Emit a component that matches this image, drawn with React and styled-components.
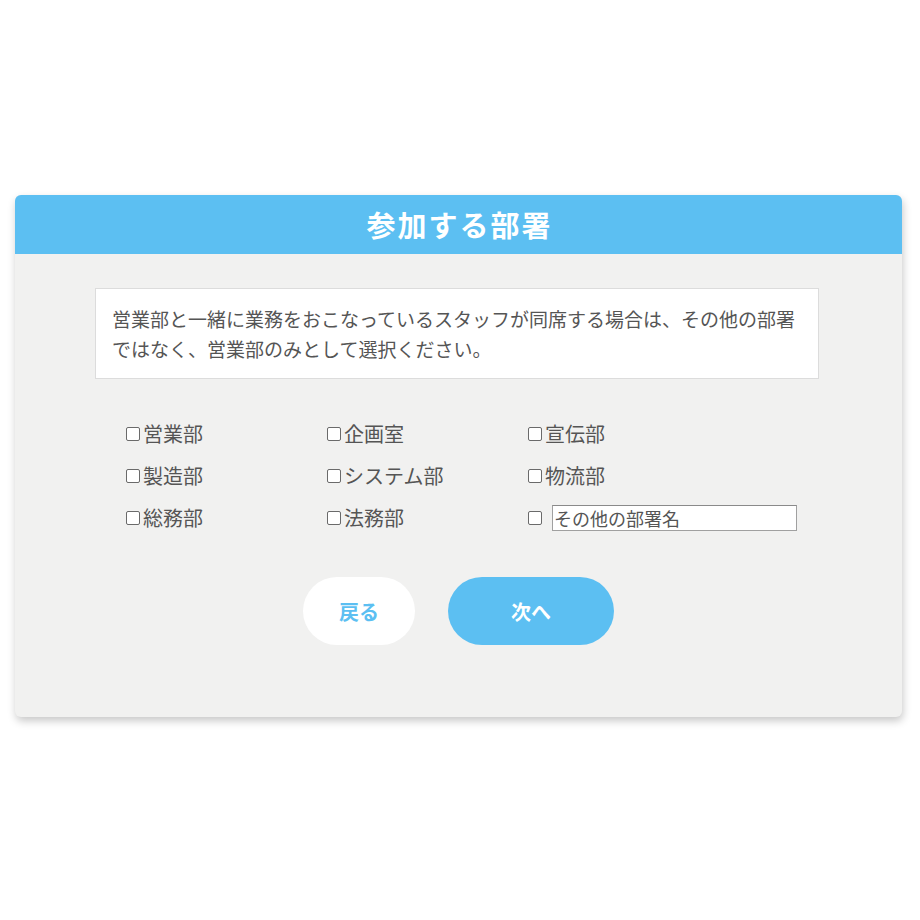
import React from "react";
import styled, { createGlobalStyle } from "styled-components";

const Global = createGlobalStyle`
  html, body { margin: 0; padding: 0; background: #ffffff; }
  body { font-family: "Noto Sans CJK JP", "Noto Sans", sans-serif; }
  * { box-sizing: border-box; }
`;

const Page = styled.div`
  padding: 195px 0 0 15px;
  width: 920px;
  height: 920px;
`;

const Card = styled.section`
  width: 887px;
  background: #f1f1f0;
  border-radius: 6px;
  box-shadow: 1px 4px 9px rgba(0, 0, 0, 0.22);
  overflow: hidden;
`;

const Header = styled.header`
  height: 59px;
  background: #5cbff2;
  display: flex;
  align-items: center;
  justify-content: center;
`;

const Title = styled.h1`
  margin: 0 0 0 2px;
  color: #ffffff;
  font-size: 29px;
  font-weight: 700;
  letter-spacing: 2px;
  line-height: 1;
`;

const Body = styled.div`
  padding: 34px 83px 72px 80px;
  display: flex;
  flex-direction: column;
`;

const Notice = styled.p`
  margin: 0;
  background: #ffffff;
  border: 1px solid #dcdcdc;
  padding: 15px 16px;
  color: #555555;
  font-size: 19px;
  line-height: 30px;
  height: 91px;
`;

const Options = styled.div`
  margin: 34px 0 0 30px;
  display: grid;
  grid-template-columns: 201px 201px 280px;
  grid-auto-rows: 42px;
`;

const Option = styled.label`
  display: flex;
  align-items: center;
  color: #555555;
  font-size: 20px;
  line-height: 1;
`;

const Box = styled.input.attrs({ type: "checkbox" })`
  appearance: none;
  margin: 0 3px 0 1px;
  width: 14px;
  height: 14px;
  border: 1px solid #6a6a6a;
  border-radius: 2px;
  background: #ffffff;
  flex: none;
`;

const OtherBox = styled(Box)`
  margin-right: 10px;
`;

const OtherInput = styled.input`
  width: 245px;
  height: 26px;
  border: 1px solid #a0a0a0;
  border-top-color: #8a8a8a;
  background: #ffffff;
  padding: 0 1px;
  font-family: "Noto Sans CJK JP", sans-serif;
  font-size: 18px;
  color: #555555;
  outline: none;
  &::placeholder { color: #555555; opacity: 1; }
`;

const Actions = styled.div`
  margin-top: 38px;
  margin-right: -3px;
  display: flex;
  justify-content: center;
  gap: 33px;
`;

const Button = styled.button`
  height: 68px;
  width: ${(p) => p.$w}px;
  border: none;
  border-radius: 34px;
  background: ${(p) => (p.$primary ? "#5cbff2" : "#ffffff")};
  color: ${(p) => (p.$primary ? "#ffffff" : "#5cbff2")};
  font-family: "Noto Sans CJK JP", sans-serif;
  font-size: 20px;
  font-weight: 700;
  cursor: pointer;
`;

const items = [
  "営業部", "企画室", "宣伝部",
  "製造部", "システム部", "物流部",
  "総務部", "法務部",
];

export default function App() {
  return (
    <>
      <Global />
      <Page>
        <Card>
          <Header>
            <Title>参加する部署</Title>
          </Header>
          <Body>
            <Notice>
              営業部と一緒に業務をおこなっているスタッフが同席する場合は、その他の部署ではなく、営業部のみとして選択ください。
            </Notice>
            <Options>
              {items.map((name) => (
                <Option key={name}>
                  <Box />
                  {name}
                </Option>
              ))}
              <Option>
                <OtherBox />
                <OtherInput placeholder="その他の部署名" />
              </Option>
            </Options>
            <Actions>
              <Button $w={112}>戻る</Button>
              <Button $w={166} $primary>次へ</Button>
            </Actions>
          </Body>
        </Card>
      </Page>
    </>
  );
}
